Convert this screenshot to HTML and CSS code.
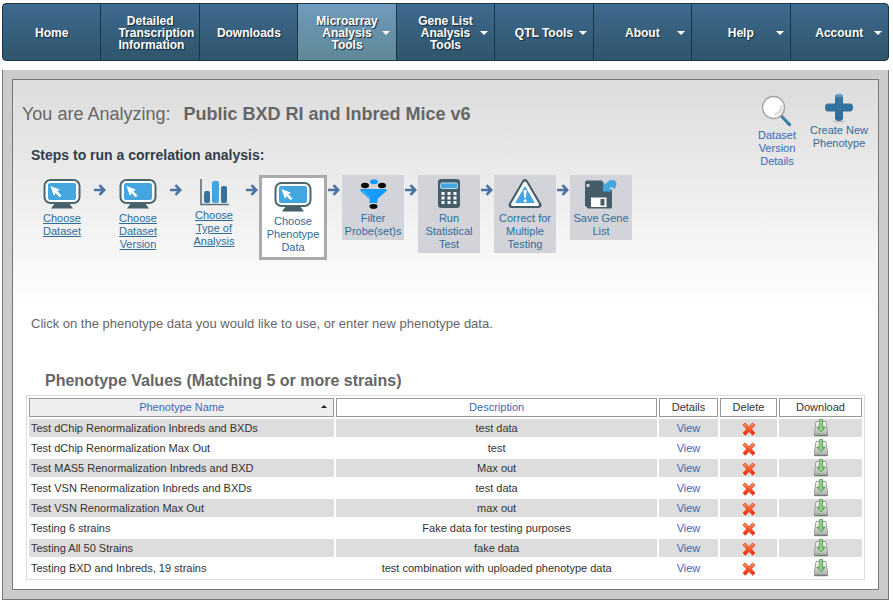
FILE: index.html
```html
<!DOCTYPE html>
<html lang="en">
<head>
<meta charset="utf-8">
<title>Correlation Analysis - Choose Phenotype Data</title>
<link rel="stylesheet" href="styles.css">
</head>
<body>
<svg class="defs" aria-hidden="true">
  <defs>
    <linearGradient id="drive" x1="0" y1="0" x2="0" y2="1"><stop offset="0" stop-color="#fff"/><stop offset="1" stop-color="#a9a9a9"/></linearGradient>
    <linearGradient id="green" x1="0" y1="0" x2="1" y2="0"><stop offset="0" stop-color="#4e9d4a"/><stop offset=".45" stop-color="#9ed698"/><stop offset="1" stop-color="#43913f"/></linearGradient>
    <linearGradient id="red" x1="0" y1="0" x2="0" y2="1"><stop offset="0" stop-color="#ff9a72"/><stop offset=".5" stop-color="#f9552a"/><stop offset="1" stop-color="#e8220c"/></linearGradient>
    <linearGradient id="plus" x1="0" y1="0" x2="0" y2="1"><stop offset="0" stop-color="#7fb8dc"/><stop offset=".18" stop-color="#34759f"/><stop offset="1" stop-color="#2b6c9c"/></linearGradient>
  </defs>
  <symbol id="monitor" viewBox="0 0 38 30">
    <path d="M12 24h14l4 5.500h-22z" fill="#47606a"/>
    <rect x="1.500" y="1" width="35" height="23" rx="6" fill="#fff" stroke="#4c656f" stroke-width="2"/>
    <rect x="5" y="4" width="28" height="17" rx="2" fill="#43a6df"/>
    <path d="M7.500 7l9.500 3.700-2.700 1.500 4.200 4.200-1.900 1.800-4.100-4.100-1.500 2.900z" fill="#fff"/>
  </symbol>
  <symbol id="arrow" viewBox="0 0 12 12">
    <path d="M0 6h9M5.500 1.200L10.200 6l-4.700 4.800" fill="none" stroke="#4c72a3" stroke-width="2.600"/>
  </symbol>
  <symbol id="delete" viewBox="0 0 14 14">
    <path d="M1 3L3.200 1 7 4.700 10.600 1 13 3.200 9.400 7 13 11 10.800 13.200 7 9.500 3.300 13.200 1 11 4.600 7z" fill="url(#red)" stroke="#e4502e" stroke-width="1" stroke-linejoin="round"/>
  </symbol>
  <symbol id="download" viewBox="0 0 14 18">
    <path d="M2 2.500h10L13.500 13v3.500H.5V13z" fill="url(#drive)" stroke="#9d9d9d"/>
    <path d="M.5 16.500h13" stroke="#777" stroke-width="1.400"/>
    <path d="M3 14.500h3" stroke="#79c873"/>
    <path d="M5.300.5h3.400v7.700h2.500L7 13 2.800 8.200h2.500z" fill="url(#green)" stroke="#4a9846" stroke-width=".7"/>
  </symbol>
</svg>

<nav class="menu">
  <a href="#"><span>Home</span></a>
  <a href="#"><span>Detailed Transcription Information</span></a>
  <a href="#"><span>Downloads</span></a>
  <a href="#" class="drop current"><span>Microarray Analysis Tools</span></a>
  <a href="#" class="drop"><span>Gene List Analysis Tools</span></a>
  <a href="#" class="drop"><span>QTL Tools</span></a>
  <a href="#" class="drop"><span>About</span></a>
  <a href="#" class="drop"><span>Help</span></a>
  <a href="#" class="drop"><span>Account</span></a>
</nav>

<div class="frame">
<main class="page">
  <div class="top">
    <div class="intro">
      <h1><span>You are Analyzing:</span> Public BXD RI and Inbred Mice v6</h1>
      <h2>Steps to run a correlation analysis:</h2>
      <div class="steps">
        <a href="#" class="step done"><svg class="icon"><use href="#monitor"/></svg>Choose Dataset</a>
        <svg class="arrow"><use href="#arrow"/></svg>
        <a href="#" class="step done"><svg class="icon"><use href="#monitor"/></svg>Choose Dataset Version</a>
        <svg class="arrow"><use href="#arrow"/></svg>
        <a href="#" class="step done"><svg class="icon chart" viewBox="0 0 30 27">
          <path d="M2 0v25.500h28" fill="none" stroke="#5c7079" stroke-width="1.600"/>
          <rect x="5" y="12" width="6" height="12" rx="2" fill="#34729f"/>
          <rect x="13" y="2" width="7" height="22" rx="2" fill="#43a6df"/>
          <rect x="22" y="7" width="6" height="17" rx="2" fill="#34729f"/>
        </svg>Choose Type of Analysis</a>
        <svg class="arrow"><use href="#arrow"/></svg>
        <div class="step active"><svg class="icon"><use href="#monitor"/></svg>Choose Phenotype Data</div>
        <svg class="arrow"><use href="#arrow"/></svg>
        <div class="step todo"><svg class="icon" viewBox="0 0 38 30">
          <path d="M6.500 10h26v2l-9 8v4h-8v-4l-9-8z" fill="#169bff"/>
          <path d="M9 12l7.500 7" fill="none" stroke="#6cc1ff" stroke-width="1"/>
          <ellipse cx="11" cy="6.500" rx="4" ry="2.700" fill="#080808"/>
          <ellipse cx="28" cy="6.500" rx="4" ry="2.700" fill="#080808"/>
          <ellipse cx="20" cy="2.700" rx="4" ry="2.500" fill="#169bff"/>
          <ellipse cx="19.500" cy="27.500" rx="4" ry="2.400" fill="#080808"/>
        </svg>Filter Probe(set)s</div>
        <svg class="arrow"><use href="#arrow"/></svg>
        <div class="step todo"><svg class="icon" viewBox="0 0 38 30">
          <rect x="8" y="0" width="22" height="29" rx="3" fill="#455d68"/>
          <rect x="10.500" y="4" width="17" height="5.500" rx="1.500" fill="#43a6df" stroke="#b9dff3"/>
          <path d="M11.500 14.500h3m3 0h3m3 0h3m-15 4.500h3m3 0h3m3 0h3m-15 4.500h3m3 0h3m3 0h3" stroke="#fff" stroke-width="2.800"/>
        </svg>Run Statistical Test</div>
        <svg class="arrow"><use href="#arrow"/></svg>
        <div class="step todo"><svg class="icon" viewBox="0 0 38 30">
          <path d="M19 3L32.500 26h-27z" fill="#455d68" stroke="#455d68" stroke-width="6" stroke-linejoin="round"/>
          <path d="M19 4L31.500 25.500h-25z" fill="#43a6df" stroke="#fff" stroke-width="3" stroke-linejoin="round"/>
          <path d="M17.500 11h3.200l-.8 8h-1.600z" fill="#fff"/>
          <circle cx="19.100" cy="21.800" r="1.500" fill="#fff"/>
        </svg>Correct for Multiple Testing</div>
        <svg class="arrow"><use href="#arrow"/></svg>
        <div class="step todo"><svg class="icon" viewBox="0 0 38 30">
          <path d="M5 1.500h15l3 5v4h7V28q0 1.500-1.500 1.500H6L3 26.500v-23q0-2 2-2z" fill="#455d68"/>
          <path d="M4.500 5h3v3h-3z" fill="#d4d5da"/>
          <path d="M9 18.500h15.500V28H9z" fill="#fff"/>
          <path d="M18.500 20h4v6.500h-4z" fill="#455d68"/>
          <path d="M21 3v9.500h9l-2.700-3q3.500-3 5 1Q37.500 1.500 30 1q-4 0-6.300 4.500z" fill="#43a6df"/>
        </svg>Save Gene List</div>
      </div>
    </div>
    <div class="tools">
      <a href="#" class="tool details"><svg class="glass" viewBox="0 0 32 32">
        <path d="M20.500 21l8 8.500" stroke="#31719f" stroke-width="3.200" stroke-linecap="round"/>
        <path d="M20.500 20l8.500 8.500" stroke="#75afd5" stroke-width="1"/>
        <circle cx="12.500" cy="12.500" r="11" fill="#fff" stroke="#a6a6a6" stroke-width="1.500"/>
        <path d="M20.500 10q1 7.500-7 9.500" fill="none" stroke="#ddd" stroke-width="3"/>
      </svg>Dataset Version Details</a>
      <a href="#" class="tool create"><svg class="plus" viewBox="0 0 30 30">
        <ellipse cx="15" cy="28.500" rx="7" ry="1.200" fill="#c6c6c6"/>
        <path d="M11 3q0-2.500 4-2.500T19 3v7.500H26q3 0 3 4T26 18.500h-7v6.500q0 3-4 3t-4-3v-6.500H4q-3 0-3-4T4 10.500h7z" fill="url(#plus)"/>
      </svg>Create New Phenotype</a>
    </div>
  </div>

  <p class="hint">Click on the phenotype data you would like to use, or enter new phenotype data.</p>

  <h3>Phenotype Values (Matching 5 or more strains)</h3>
  <table>
    <thead>
      <tr><th class="name sorted"><a href="#">Phenotype Name</a></th><th class="desc"><a href="#">Description</a></th><th class="view">Details</th><th class="del">Delete</th><th class="down">Download</th></tr>
    </thead>
    <tbody>
      <tr><td>Test dChip Renormalization Inbreds and BXDs</td><td>test data</td><td><a href="#">View</a></td><td><button aria-label="Delete"><svg><use href="#delete"/></svg></button></td><td><a href="#" aria-label="Download"><svg class="save"><use href="#download"/></svg></a></td></tr>
      <tr><td>Test dChip Renormalization Max Out</td><td>test</td><td><a href="#">View</a></td><td><button aria-label="Delete"><svg><use href="#delete"/></svg></button></td><td><a href="#" aria-label="Download"><svg class="save"><use href="#download"/></svg></a></td></tr>
      <tr><td>Test MAS5 Renormalization Inbreds and BXD</td><td>Max out</td><td><a href="#">View</a></td><td><button aria-label="Delete"><svg><use href="#delete"/></svg></button></td><td><a href="#" aria-label="Download"><svg class="save"><use href="#download"/></svg></a></td></tr>
      <tr><td>Test VSN Renormalization Inbreds and BXDs</td><td>test data</td><td><a href="#">View</a></td><td><button aria-label="Delete"><svg><use href="#delete"/></svg></button></td><td><a href="#" aria-label="Download"><svg class="save"><use href="#download"/></svg></a></td></tr>
      <tr><td>Test VSN Renormalization Max Out</td><td>max out</td><td><a href="#">View</a></td><td><button aria-label="Delete"><svg><use href="#delete"/></svg></button></td><td><a href="#" aria-label="Download"><svg class="save"><use href="#download"/></svg></a></td></tr>
      <tr><td>Testing 6 strains</td><td>Fake data for testing purposes</td><td><a href="#">View</a></td><td><button aria-label="Delete"><svg><use href="#delete"/></svg></button></td><td><a href="#" aria-label="Download"><svg class="save"><use href="#download"/></svg></a></td></tr>
      <tr><td>Testing All 50 Strains</td><td>fake data</td><td><a href="#">View</a></td><td><button aria-label="Delete"><svg><use href="#delete"/></svg></button></td><td><a href="#" aria-label="Download"><svg class="save"><use href="#download"/></svg></a></td></tr>
      <tr><td>Testing BXD and Inbreds, 19 strains</td><td>test combination with uploaded phenotype data</td><td><a href="#">View</a></td><td><button aria-label="Delete"><svg><use href="#delete"/></svg></button></td><td><a href="#" aria-label="Download"><svg class="save"><use href="#download"/></svg></a></td></tr>
    </tbody>
  </table>
</main>
</div>
</body>
</html>
```

FILE: styles.css
```css
* { box-sizing: border-box; }

body {
  margin: 3px 4px 2px 2px;
  background: #fff;
  color: #333;
  font: 11px/13px "Liberation Sans", Arial, sans-serif;
}

.defs { position: absolute; width: 0; height: 0; }
svg { display: block; }
a { color: #3a68b8; text-decoration: none; }
h1, h2, h3, p { margin: 0; }

/* Top menu */
.menu {
  display: flex;
  height: 58px;
  border: 1px solid #1b3444;
  border-radius: 4px;
  overflow: hidden;
  background: linear-gradient(#3e6a90, #2f556b);
}
.menu a {
  position: relative;
  flex: 1 1 0;
  min-width: 0;
  display: flex;
  align-items: center;
  justify-content: center;
  padding: 2px 17px 0;
  border-right: 1px solid #1b3444;
  color: #fff;
  font-weight: bold;
  font-size: 12px;
  line-height: 12px;
  text-align: center;
  text-shadow: 1px 1px 1px #152733;
}
.menu span { min-width: 0; }
.menu a:last-child { border-right: 0; }
.menu .current { background: linear-gradient(#6f9abf, #5f8996); }
.menu .drop::after {
  content: "";
  position: absolute;
  right: 6px;
  top: 27px;
  border: 4px solid transparent;
  border-top-color: #fff;
  border-bottom: 0;
}

/* Page frame */
.frame {
  margin-top: 9px;
  padding: 9px;
  border: 1px solid #777;
  border-top: 0;
  background: #ccc;
}
.page {
  padding: 0 13px 9px;
  border: 1px solid #777;
  background: #fff linear-gradient(#dcdcdc, #fff 230px) no-repeat;
}
.top { display: flex; justify-content: space-between; }
.intro { padding-left: 5px; }

h1 {
  margin: 23px 0 0 -9px;
  color: #666;
  font-size: 18px;
  line-height: 22px;
}
h1 span { margin-right: 8px; font-weight: normal; }
h2 {
  margin: 22px 0 12px;
  color: #2f3d4d;
  font-size: 14px;
  line-height: 16px;
}

/* Analysis steps */
.steps { display: flex; align-items: flex-start; }
.step {
  width: 62px;
  padding: 4px 0 2px;
  color: #2e6c9b;
  text-align: center;
}
.step .icon { width: 38px; height: 30px; margin: 0 auto 3px; }
.step .chart { width: 30px; height: 27px; }
.done { text-decoration: underline; }
.todo { background: #d3d4d9; }
.active {
  width: 68px;
  padding-bottom: 3px;
  border: 3px solid #aaa;
  background: #fff;
}
.arrow { width: 12px; height: 12px; margin: 9px 1px 0; }
.active + .arrow { margin-right: 2px; }

/* Dataset tools */
.tools {
  display: flex;
  align-items: flex-start;
  gap: 6px;
  padding-top: 13px;
}
.tool { text-align: center; }
.tool svg { margin: 0 auto; }
.details { width: 50px; }
.create { width: 62px; margin-right: -5px; color: #2e6c9b; }
.glass { width: 32px; height: 36px; }
.plus { width: 30px; height: 30px; }
.create svg { margin-bottom: 1px; }

.hint {
  margin: 56px 0 39px 5px;
  color: #666;
  font-size: 13px;
  line-height: 16px;
}
h3 {
  margin: 0 0 4px 19px;
  color: #666;
  font-size: 16px;
  line-height: 20px;
}

/* Phenotype table */
table {
  width: 100%;
  table-layout: fixed;
  border: 1px solid #ddd;
  border-collapse: separate;
  border-spacing: 2px;
  background: #fff;
}
th, td { padding: 0; text-align: center; vertical-align: middle; }
th {
  position: relative;
  height: 19px;
  border: 1px solid #999;
  font-weight: normal;
}
.name { width: 37%; }
.view { width: 59px; }
.del { width: 57px; }
.down { width: 83px; }
.sorted { background: #eee; }
.sorted::after {
  content: "";
  position: absolute;
  right: 6px;
  top: 6px;
  border: 3px solid transparent;
  border-bottom-color: #222;
  border-top: 0;
}
td { height: 18px; }
td:first-child { padding-left: 2px; text-align: left; }
tbody tr:nth-child(odd) td { background: #ddd; }
td svg { width: 14px; height: 14px; margin: 2px auto 0; }
td .save { height: 18px; margin-top: 0; }
button {
  display: block;
  margin: 0 auto;
  padding: 0;
  border: 0;
  background: none;
  cursor: pointer;
}
```
